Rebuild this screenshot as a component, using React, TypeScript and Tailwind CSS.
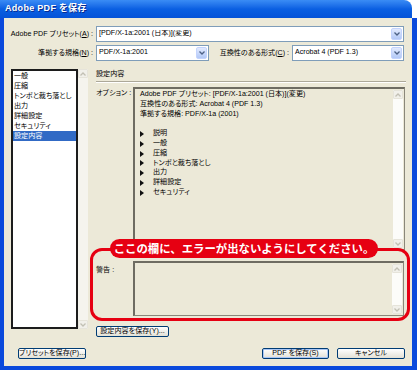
import React from 'react'

function Chevron({ up }: { up?: boolean }) {
  return (
    <svg width="6" height="4" viewBox="0 0 6 4">
      <polyline
        points={up ? '0.5,3.5 3,1 5.5,3.5' : '0.5,0.5 3,3 5.5,0.5'}
        fill="none"
        stroke="currentColor"
        strokeWidth="1.3"
      />
    </svg>
  )
}

function Combo({ w, value }: { w: string; value: string }) {
  return (
    <div className={`flex h-[16px] items-center border border-[#7F9DB9] bg-white ${w}`}>
      <span className="flex-1 truncate pl-[2px] leading-none">{value}</span>
      <span className="mr-px flex h-[12px] w-[11px] items-center justify-center rounded-[2px] border border-[#C3D3FD] bg-linear-to-b from-[#E2EAFE] to-[#B2C8F6] text-[#4D6185]">
        <Chevron />
      </span>
    </div>
  )
}

function ScrollBar({ list }: { list?: boolean }) {
  return (
    <div className={`flex flex-col ${list ? 'w-[10px] bg-[#F5F4EE]' : 'w-[10px] bg-[#FCFCF9]'}`}>
      <div className="flex h-[9px] items-center justify-center rounded-[1px] border border-[#E6E4DA] bg-[#F1F0EA] text-[#C2C0B4]">
        <Chevron up />
      </div>
      <div className="flex-1" />
      <div className="flex h-[9px] items-center justify-center rounded-[1px] border border-[#E6E4DA] bg-[#F1F0EA] text-[#C2C0B4]">
        <Chevron />
      </div>
    </div>
  )
}

function XpButton({ w, label, main }: { w: string; label: string; main?: boolean }) {
  return (
    <button
      className={`flex h-[11px] items-center justify-center whitespace-nowrap rounded-[2px] border border-[#003C74] bg-linear-to-b from-white to-[#E3E1D6] leading-none text-black ${w} ${
        main ? 'shadow-[inset_0_0_0_1px_#A9C6F5]' : ''
      }`}
    >
      {label}
    </button>
  )
}

const sections = ['一般', '圧縮', 'トンボと裁ち落とし', '出力', '詳細設定', 'セキュリティ', '設定内容']
const tree = ['説明', '一般', '圧縮', 'トンボと裁ち落とし', '出力', '詳細設定', 'セキュリティ']

export default function App() {
  return (
    <div className="relative h-[370px] w-[417px] overflow-hidden whitespace-nowrap bg-white font-['Liberation_Sans','Noto_Sans_CJK_JP',sans-serif] text-[7.1px] text-black [font-feature-settings:'palt']">
      {/* title bar */}
      <div className="flex h-[18px] w-[412px] items-center rounded-tr-[8px] bg-linear-to-b from-[#3A8CF5] via-[#0A5FE2] to-[#0553D8] pl-[5px]">
        <span className="text-[9px] font-bold tracking-[0.3px] text-white [text-shadow:1px_1px_0_#0A2C8F]">
          Adobe PDF を保存
        </span>
      </div>

      <div className="flex h-[348px]">
        <div className="w-[4px] bg-[#0A49DC]" />
        <div className="flex w-[408px] flex-col bg-[#ECE9D8]">
          {/* preset row */}
          <div className="mt-[8px] flex items-center">
            <span className="mr-[3px] w-[89px] text-right">
              Adobe PDF プリセット(<u>A</u>) :
            </span>
            <Combo w="w-[308px]" value="[PDF/X-1a:2001 (日本)](変更)" />
          </div>

          {/* standard / compatibility row */}
          <div className="mt-[3px] flex items-center">
            <span className="mr-[3px] w-[89px] text-right">
              準拠する規格(<u>N</u>) :
            </span>
            <Combo w="w-[113px]" value="PDF/X-1a:2001" />
            <span className="ml-[6px] mr-[3px] w-[74px] text-right">
              互換性のある形式(<u>C</u>) :
            </span>
            <Combo w="w-[112px]" value="Acrobat 4 (PDF 1.3)" />
          </div>

          {/* main area */}
          <div className="mt-[8px] flex h-[268px]">
            <div className="ml-[7px] flex h-[260px]">
              <div className="w-[67px] overflow-hidden border-2 border-[#1C1C1C] bg-white">
                {sections.map((s, i) => (
                  <div
                    key={s}
                    className={`h-[10px] pl-px leading-[10px] ${
                      i === sections.length - 1 ? 'bg-[#316AC5] text-white' : ''
                    }`}
                  >
                    {s}
                  </div>
                ))}
              </div>
              <ScrollBar list />
            </div>

            <div className="ml-[8px] flex w-[310px] flex-col">
              <div className="h-[11px] leading-[11px]">設定内容</div>
              <div className="mt-px border-t border-b border-t-[#ACA899] border-b-white" />

              <div className="mt-[4px] flex">
                <span className="w-[37px] pt-px leading-[10px]">オプション :</span>
                <div className="flex h-[163px] w-[272px] border border-t-2 border-l-2 border-[#8A877A] border-t-[#6E6C62] border-l-[#6E6C62] bg-[#ECE9D8]">
                  <div className="flex-1 pl-[5px] pt-px leading-[9.8px]">
                    <div>Adobe PDF プリセット: [PDF/X-1a:2001 (日本)](変更)</div>
                    <div>互換性のある形式: Acrobat 4 (PDF 1.3)</div>
                    <div>準拠する規格: PDF/X-1a (2001)</div>
                    <div className="h-[9.8px]" />
                    {tree.map((t) => (
                      <div key={t} className="flex items-center">
                        <svg width="4" height="6" viewBox="0 0 4 6">
                          <polygon points="0,0 4,3 0,6" fill="#111" />
                        </svg>
                        <span className="ml-[9px]">{t}</span>
                      </div>
                    ))}
                  </div>
                  <div className="py-px pr-px">
                    <div className="flex h-full">
                      <ScrollBar />
                    </div>
                  </div>
                </div>
              </div>

              <div className="mt-[11px] flex">
                <span className="w-[37px] pt-[4px] leading-[10px]">警告 :</span>
                <div className="flex h-[55px] w-[271px] border border-t-2 border-l-2 border-[#8A877A] border-t-[#6E6C62] border-l-[#6E6C62] bg-[#ECE9D8]">
                  <div className="flex-1" />
                  <div className="py-px pr-px">
                    <div className="flex h-full">
                      <ScrollBar />
                    </div>
                  </div>
                </div>
              </div>

              <div className="mt-[10px]">
                <XpButton w="w-[73px]" label="設定内容を保存(Y)..." />
              </div>
            </div>
          </div>

          {/* bottom buttons */}
          <div className="mt-[11px] flex items-center">
            <div className="ml-[14px]">
              <XpButton w="w-[68px]" label="プリセットを保存(P)..." />
            </div>
            <div className="ml-auto mr-[7px] flex gap-[8px]">
              <XpButton w="w-[67px]" label="PDF を保存(S)" main />
              <XpButton w="w-[68px]" label="キャンセル" />
            </div>
          </div>
        </div>
        <div className="w-[5px] bg-[#0A49DC]" />
      </div>
      <div className="h-[4px] bg-[#0A49DC]" />

      {/* callout overlay */}
      <div className="absolute left-[90px] top-[248px] h-[73px] w-[320px] rounded-[12px] border-[3px] border-[#E60012]" />
      <div className="absolute left-[110px] top-[239px] flex h-[19px] w-[268px] items-center justify-center rounded-full bg-[#E60012] font-['Noto_Sans_CJK_JP',sans-serif] text-[11.4px] font-bold text-white [font-feature-settings:normal]">
        ここの欄に、エラーが出ないようにしてください。
      </div>
    </div>
  )
}
